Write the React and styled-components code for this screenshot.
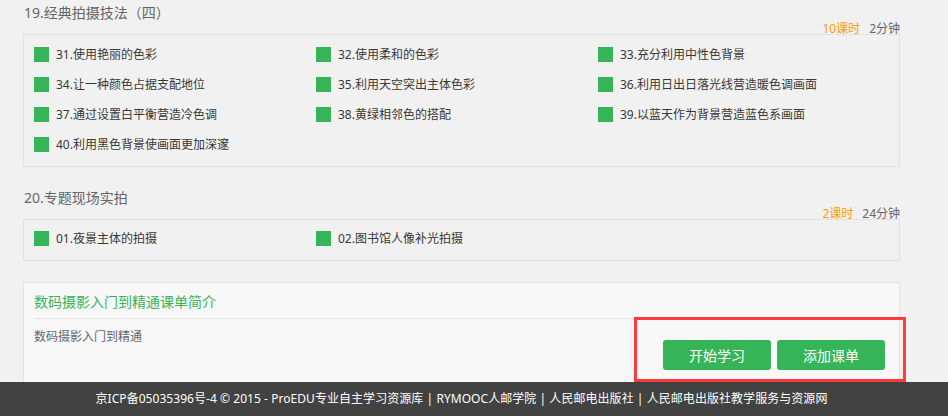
import React from "react";
import styled, { createGlobalStyle } from "styled-components";

const GlobalStyle = createGlobalStyle`
  html, body {
    margin: 0;
    padding: 0;
    background: #f1f1f1;
  }
  body {
    font-family: "Noto Sans", "Noto Sans CJK SC", sans-serif;
    color: #333;
  }
`;

const Page = styled.div`
  width: 948px;
  height: 416px;
  overflow: hidden;
  display: flex;
  flex-direction: column;
`;

const Main = styled.div`
  width: 877px;
  margin-left: 23px;
  flex: 1;
  display: flex;
  flex-direction: column;
`;

const Section = styled.section`
  margin-top: ${(p) => p.$top || 0}px;
`;

const Header = styled.div`
  height: 34px;
  display: flex;
  justify-content: space-between;
  align-items: flex-end;
`;

const Title = styled.h3`
  align-self: flex-start;
  margin: 0 0 0 1px;
  font-size: 14px;
  font-weight: normal;
  line-height: 26px;
  color: #666;
`;

const Meta = styled.div`
  font-size: 12px;
  line-height: 14px;
  margin-bottom: -2px;
  display: flex;
  gap: 9px;
`;

const Hours = styled.span`
  color: #ff9c00;
`;

const Minutes = styled.span`
  color: #666;
`;

const LessonBox = styled.div`
  border: 1px solid #e2e2e2;
  padding: ${(p) => p.$padTop}px 10px 7px;
  display: grid;
  grid-template-columns: repeat(3, 282px);
`;

const Lesson = styled.div`
  height: 30px;
  display: flex;
  align-items: center;
  gap: 7px;
  font-size: 12px;
  color: #383838;
  white-space: nowrap;
`;

const Mark = styled.span`
  width: 15px;
  height: 15px;
  flex: none;
  background: #35b558;
`;

const Intro = styled.div`
  position: relative;
  margin-top: 21px;
  flex: 1;
  background: #f8f8f8;
  border: 1px solid #e3e3e3;
  border-bottom: none;
  padding: 0 10px;
`;

const IntroTitle = styled.h4`
  margin: 0;
  height: 35px;
  line-height: 37px;
  font-size: 14px;
  font-weight: normal;
  color: #35b558;
  border-bottom: 1px solid #e3e3e3;
`;

const IntroBody = styled.div`
  display: flex;
  justify-content: space-between;
  align-items: flex-start;
  padding-top: 9px;
`;

const IntroText = styled.p`
  margin: 0;
  font-size: 12px;
  line-height: 18px;
  color: #666;
`;

const Actions = styled.div`
  display: flex;
  gap: 6px;
  margin-top: 12px;
  margin-right: 4px;
`;

const Button = styled.button`
  width: 108px;
  height: 30px;
  border: none;
  border-radius: 3px;
  background: #35b558;
  color: #fff;
  font-family: inherit;
  font-size: 14px;
  cursor: pointer;
`;

const Highlight = styled.div`
  position: absolute;
  left: 610px;
  top: 34px;
  width: 266px;
  height: 59px;
  border: 3px solid #ff3b3b;
  pointer-events: none;
`;

const Footer = styled.footer`
  height: 34px;
  flex: none;
  background: #424242;
`;

const FooterText = styled.div`
  width: 877px;
  margin-left: 23px;
  text-align: center;
  line-height: 34px;
  font-size: 12px;
  letter-spacing: 0.05px;
  color: #fff;
  white-space: nowrap;
`;

const chapters = [
  {
    title: "19.经典拍摄技法（四）",
    hours: "10课时",
    minutes: "2分钟",
    padTop: 4,
    lessons: [
      "31.使用艳丽的色彩",
      "32.使用柔和的色彩",
      "33.充分利用中性色背景",
      "34.让一种颜色占据支配地位",
      "35.利用天空突出主体色彩",
      "36.利用日出日落光线营造暖色调画面",
      "37.通过设置白平衡营造冷色调",
      "38.黄绿相邻色的搭配",
      "39.以蓝天作为背景营造蓝色系画面",
      "40.利用黑色背景使画面更加深邃",
    ],
  },
  {
    title: "20.专题现场实拍",
    hours: "2课时",
    minutes: "24分钟",
    padTop: 3,
    lessons: ["01.夜景主体的拍摄", "02.图书馆人像补光拍摄"],
  },
];

export default function App() {
  return (
    <Page>
      <GlobalStyle />
      <Main>
        {chapters.map((c, i) => (
          <Section key={c.title} $top={i === 0 ? 0 : 18}>
            <Header>
              <Title>{c.title}</Title>
              <Meta>
                <Hours>{c.hours}</Hours>
                <Minutes>{c.minutes}</Minutes>
              </Meta>
            </Header>
            <LessonBox $padTop={c.padTop}>
              {c.lessons.map((l) => (
                <Lesson key={l}>
                  <Mark />
                  {l}
                </Lesson>
              ))}
            </LessonBox>
          </Section>
        ))}
        <Intro>
          <IntroTitle>数码摄影入门到精通课单简介</IntroTitle>
          <IntroBody>
            <IntroText>数码摄影入门到精通</IntroText>
            <Actions>
              <Button>开始学习</Button>
              <Button>添加课单</Button>
            </Actions>
          </IntroBody>
          <Highlight />
        </Intro>
      </Main>
      <Footer>
        <FooterText>
          京ICP备05035396号-4 © 2015 - ProEDU专业自主学习资源库 | RYMOOC人邮学院 | 人民邮电出版社 | 人民邮电出版社教学服务与资源网
        </FooterText>
      </Footer>
    </Page>
  );
}
